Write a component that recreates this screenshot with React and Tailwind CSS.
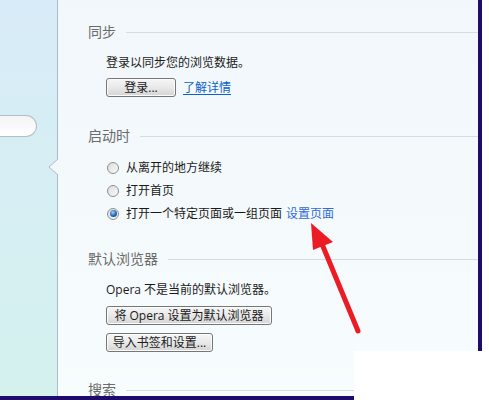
import React from "react";

const FONT = { fontFamily: '"Open Sans", "Noto Sans CJK SC", sans-serif' };

function Heading({ children }) {
  return (
    <div className="flex h-[20px] items-center">
      <span className="text-[14px] leading-[20px] text-[#6b6b6b]">{children}</span>
      <div className="ml-[10px] h-px flex-1 bg-[#d6dce1]" />
    </div>
  );
}

function Button({ children, w }) {
  return (
    <div
      className={`flex h-[19px] items-center justify-center rounded-[3px] border border-[#767676] bg-linear-to-b from-[#f6f6f6] via-[#e9e9e9] to-[#d4d4d4] text-[12px] leading-[17px] text-[#1a1a1a] shadow-[inset_0_0_0_1px_#fbfbfb] ${w}`}
    >
      {children}
    </div>
  );
}

function Radio({ checked, children }) {
  return (
    <div className="flex h-[23px] items-center">
      <span className="flex h-[12px] w-[12px] items-center justify-center rounded-full border border-[#8f8f8f] bg-linear-to-br from-[#dcdcdc] to-[#fafafa]">
        {checked && (
          <span className="h-[7px] w-[7px] rounded-full bg-[radial-gradient(circle_at_40%_35%,#9ad6ff,#2463b4_55%,#0c3470)]" />
        )}
      </span>
      <span className="ml-[7px] text-[12px] leading-[18px] text-[#1a1a1a]">{children}</span>
    </div>
  );
}

export default function App() {
  return (
    <div className="relative flex h-[400px] w-[489px] flex-col overflow-hidden bg-white" style={FONT}>
      <div className="flex h-[396px]">
        <aside className="w-[58px] border-r border-[#a9bccb] bg-linear-to-b from-[#d8ebf8] to-[#d4f1ee]">
          <div className="mt-[115px] h-[22px] w-[37px] rounded-r-full border border-l-0 border-[#b3bfc8] bg-linear-to-b from-[#f4f4f4] to-white" />
        </aside>
        <main className="flex-1 bg-linear-to-b from-[#f1f7fb] to-[#f7fcfd] pl-[30px] pt-[22px]">
          <Heading>同步</Heading>
          <div className="pl-[18px]">
            <div className="mt-[12px] h-[18px] text-[12px] leading-[18px] text-[#1a1a1a]">登录以同步您的浏览数据。</div>
            <div className="mt-[6px] flex items-center">
              <Button w="w-[70px]">登录...</Button>
              <span className="ml-[7px] text-[12px] leading-[18px] text-[#0a62c8] underline underline-offset-2">了解详情</span>
            </div>
          </div>

          <div className="mt-[29px]">
            <Heading>启动时</Heading>
          </div>
          <div className="mt-[10px] pl-[19px]">
            <Radio>从离开的地方继续</Radio>
            <Radio>打开首页</Radio>
            <Radio checked>
              打开一个特定页面或一组页面
              <span className="ml-[4px] text-[#2f6bd3]">设置页面</span>
            </Radio>
          </div>

          <div className="mt-[24px]">
            <Heading>默认浏览器</Heading>
          </div>
          <div className="pl-[18px]">
            <div className="mt-[12px] h-[18px] text-[12px] leading-[18px] text-[#1a1a1a]">Opera 不是当前的默认浏览器。</div>
            <div className="mt-[7px] flex">
              <Button w="w-[166px]">将 Opera 设置为默认浏览器</Button>
            </div>
            <div className="mt-[8px] flex">
              <Button w="w-[107px]">导入书签和设置...</Button>
            </div>
          </div>

          <div className="mt-[28px]">
            <Heading>搜索</Heading>
          </div>
        </main>
        <div className="w-[4px] bg-[#1e0b6b]" />
        <div className="w-[7px] bg-white" />
      </div>
      <div className="h-[4px] bg-[#1e0b6b]" />

      {/* sidebar notch */}
      <svg className="absolute left-[46px] top-[158px]" width="14" height="18" viewBox="0 0 14 18">
        <polygon points="12,1 3,9 12,17 14,17 14,1" fill="#f2f8fb" />
        <polyline points="12,1 3,9 12,17" fill="none" stroke="#a9bccb" strokeWidth="1" />
      </svg>

      {/* red arrow annotation */}
      <svg className="absolute left-0 top-0" width="489" height="400" viewBox="0 0 489 400">
        <line x1="322" y1="244" x2="358" y2="331" stroke="#ec1c24" strokeWidth="5" strokeLinecap="round" />
        <polygon points="311,223 313,250 333,242" fill="#ec1c24" />
      </svg>

      {/* white cropped region */}
      <div className="absolute bottom-0 left-[354px] right-0 top-[351px] bg-white" />
    </div>
  );
}
